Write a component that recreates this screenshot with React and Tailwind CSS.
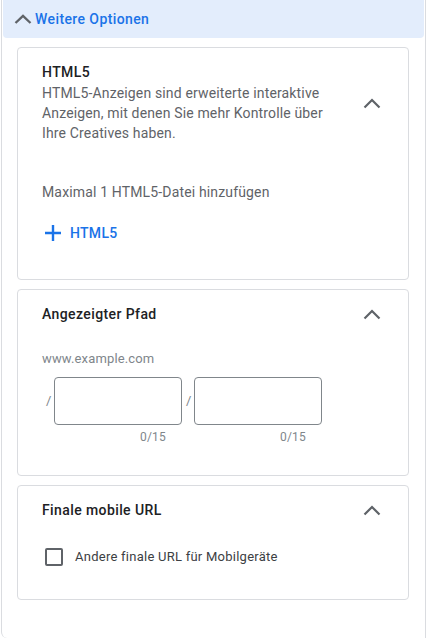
import React from "react";

function Chevron({ className = "" }) {
  return (
    <svg width="18" height="11" viewBox="0 0 18 11" className={className} fill="none">
      <polyline points="1.5,9.5 9,2 16.5,9.5" stroke="#5f6368" strokeWidth="2.2" />
    </svg>
  );
}

function Card({ children, className = "" }) {
  return (
    <div className={`mx-[14px] mr-[15px] rounded border border-[#dadce0] bg-white ${className}`}>
      {children}
    </div>
  );
}

function CardHead({ title, children, chevronClass = "" }) {
  return (
    <div className="flex items-center pl-6 pr-[27px]">
      <div className="flex-1 pr-5">
        <div className="text-[14px] leading-[22px] font-medium tracking-[0.4px] text-[#202124]">{title}</div>
        {children}
      </div>
      <Chevron className={chevronClass} />
    </div>
  );
}

function PathInput() {
  return (
    <div className="flex flex-col">
      <div className="flex items-center">
        <span className="w-2 text-[13px] text-[#80868b]">/</span>
        <div className="h-[48px] w-[128px] rounded border border-[#80868b]"></div>
      </div>
      <div className="mt-[4px] pr-4 text-right text-[12px] leading-4 tracking-[0.2px] text-[#80868b]">0/15</div>
    </div>
  );
}

export default function App() {
  return (
    <div
      className="ml-px mr-px h-[638px] rounded-bl-md border-x border-[#dadce0] px-px bg-white"
      style={{ fontFamily: "Roboto, 'Liberation Sans', sans-serif" }}
    >
      <div className="flex h-[38px] items-center gap-[3px] rounded-b-sm bg-[#e3edfc] pl-[11px]">
        <svg width="18" height="10" viewBox="0 0 18 10" fill="none">
          <polyline points="1.5,9 9,1.8 16.5,9" stroke="#5f6368" strokeWidth="2.3" />
        </svg>
        <span className="text-[14px] font-medium tracking-[0.4px] text-[#1a73e8]">Weitere Optionen</span>
      </div>

      <Card className="mt-[9px] h-[233px] pt-[13px]">
        <CardHead title="HTML5" chevronClass="mt-[3px]">
          <p className="text-[14px] leading-5 tracking-[0.15px] text-[#5f6368]">
            HTML5-Anzeigen sind erweiterte interaktive Anzeigen, mit denen Sie mehr Kontrolle über Ihre Creatives haben.
          </p>
        </CardHead>
        <div className="mt-[39px] pl-6 text-[14px] leading-5 tracking-[0.15px] text-[#5f6368]">Maximal 1 HTML5-Datei hinzufügen</div>
        <div className="mt-[13px] flex h-9 items-center gap-[9px] pl-[27px]">
          <svg width="16" height="16" viewBox="0 0 16 16" fill="none">
            <path d="M8 0v16M0 8h16" stroke="#1a73e8" strokeWidth="2.4" />
          </svg>
          <span className="text-[14px] font-medium tracking-[0.3px] text-[#1a73e8]">HTML5</span>
        </div>
      </Card>

      <Card className="mt-[9px] h-[187px] pt-[13px]">
        <CardHead title="Angezeigter Pfad" />
        <div className="mt-[24px] pl-6 text-[13px] leading-5 tracking-[0.15px] text-[#80868b]">www.example.com</div>
        <div className="mt-[8px] flex gap-1 pl-[28px]">
          <PathInput />
          <PathInput />
        </div>
      </Card>

      <Card className="mt-[9px] h-[115px] pt-[13px]">
        <CardHead title="Finale mobile URL" />
        <label className="mt-[26px] flex items-center gap-3 pl-[27px]">
          <span className="h-[18px] w-[18px] rounded-[2px] border-2 border-[#5f6368]"></span>
          <span className="text-[13px] tracking-[0.25px] text-[#3c4043]">Andere finale URL für Mobilgeräte</span>
        </label>
      </Card>
    </div>
  );
}
